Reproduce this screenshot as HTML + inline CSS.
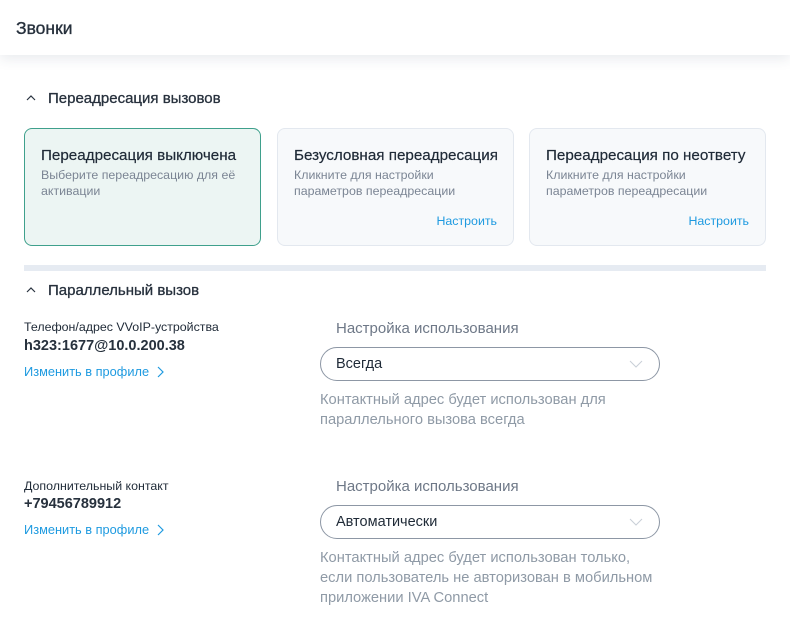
<!DOCTYPE html>
<html><head><meta charset="utf-8"><style>
body{margin:0;width:790px;height:627px;background:#fff;font-family:"Liberation Sans",sans-serif;position:relative;overflow:hidden;color:#1f2a37}
.a{position:absolute;white-space:nowrap}
.hdr{position:absolute;left:0;top:0;width:790px;height:55px;background:#fff;box-shadow:0 4px 12px rgba(40,60,90,.10)}
.card{position:absolute;top:128px;border:1px solid #e3e8ef;border-radius:8px;background:#f7f9fb;box-sizing:border-box;width:237px;height:118px}
.card.sel{background:#ecf5f3;border-color:#3fa08c}
.ct{position:absolute;left:16px;top:18px;font-size:15.2px;color:#1f2a37;white-space:nowrap;-webkit-text-stroke:0.2px #1f2a37}
.cs{position:absolute;left:16px;top:38px;font-size:12.4px;color:#7b8594;line-height:16px;white-space:normal;width:200px}
.cl{position:absolute;right:16px;top:85px;font-size:12.4px;color:#1e9ae0}
.sel2{position:absolute;left:320px;width:340px;height:34px;border:1px solid #8d97a5;border-radius:18px;box-sizing:border-box}
.sel2 span{position:absolute;left:15px;top:8px;font-size:14.5px;color:#1f2a37}
.hint{position:absolute;left:320px;font-size:14.7px;color:#8f9aa6;line-height:20px}
.lbl{position:absolute;left:336px;font-size:15px;color:#6e7887}
.link{position:absolute;left:24px;font-size:12.8px;color:#1e9ae0}
.h{font-size:15px;color:#27313d;-webkit-text-stroke:0.3px #27313d}
</style></head><body>
<div class="hdr"><div class="a" style="left:16px;top:18px;font-size:17.5px;color:#27313d;-webkit-text-stroke:0.35px #27313d">Звонки</div></div>
<svg class="a" style="left:26px;top:94px" width="10" height="8"><path d="M1 6 L5 2 L9 6" fill="none" stroke="#2a3340" stroke-width="1.2"/></svg>
<div class="a h" style="left:48px;top:90px">Переадресация вызовов</div>
<div class="card sel" style="left:24px"><div class="ct">Переадресация выключена</div><div class="cs">Выберите переадресацию для её активации</div></div>
<div class="card" style="left:277px"><div class="ct">Безусловная переадресация</div><div class="cs" style="width:185px">Кликните для настройки параметров переадресации</div><div class="cl">Настроить</div></div>
<div class="card" style="left:529px"><div class="ct">Переадресация по неответу</div><div class="cs" style="width:185px">Кликните для настройки параметров переадресации</div><div class="cl">Настроить</div></div>
<div class="a" style="left:24px;top:265px;width:742px;height:6px;background:#e6ebf2"></div>
<svg class="a" style="left:26px;top:286px" width="10" height="8"><path d="M1 6 L5 2 L9 6" fill="none" stroke="#2a3340" stroke-width="1.2"/></svg>
<div class="a h" style="left:48px;top:282px">Параллельный вызов</div>

<div class="a" style="left:24px;top:320px;font-size:12.4px">Телефон/адрес VVoIP-устройства</div>
<div class="a" style="left:24px;top:338px;font-size:14.5px;font-weight:bold;color:#27313d">h323:1677@10.0.200.38</div>
<div class="link" style="top:364px">Изменить в профиле <svg width="10" height="12" style="vertical-align:-2px;margin-left:3px"><path d="M2 1 L7 6 L2 11" fill="none" stroke="#1e9ae0" stroke-width="1.2"/></svg></div>
<div class="lbl" style="top:320px">Настройка использования</div>
<div class="sel2" style="top:347px"><span>Всегда</span><svg class="a" style="left:308px;top:12px" width="14" height="9"><path d="M1 1 L7 7 L13 1" fill="none" stroke="#c9cfd7" stroke-width="1"/></svg></div>
<div class="hint" style="top:390px">Контактный адрес будет использован для<br>параллельного вызова всегда</div>

<div class="a" style="left:24px;top:479px;font-size:12.4px">Дополнительный контакт</div>
<div class="a" style="left:24px;top:496px;font-size:14.5px;font-weight:bold;color:#27313d">+79456789912</div>
<div class="link" style="top:522px">Изменить в профиле <svg width="10" height="12" style="vertical-align:-2px;margin-left:3px"><path d="M2 1 L7 6 L2 11" fill="none" stroke="#1e9ae0" stroke-width="1.2"/></svg></div>
<div class="lbl" style="top:478px">Настройка использования</div>
<div class="sel2" style="top:505px"><span>Автоматически</span><svg class="a" style="left:308px;top:12px" width="14" height="9"><path d="M1 1 L7 7 L13 1" fill="none" stroke="#c9cfd7" stroke-width="1"/></svg></div>
<div class="hint" style="top:548px">Контактный адрес будет использован только,<br>если пользователь не авторизован в мобильном<br>приложении IVA Connect</div>
</body></html>
